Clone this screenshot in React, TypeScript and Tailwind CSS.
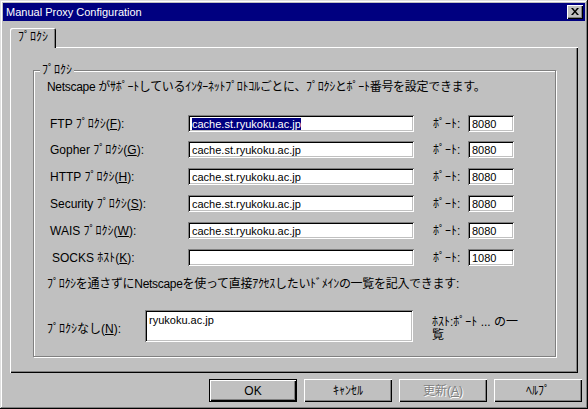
import React from "react";

const font = "font-['Liberation_Sans','Noto_Sans_CJK_JP',sans-serif]";
const sunken =
  "bg-white shadow-[inset_1px_1px_#808080,inset_-1px_-1px_#fff,inset_2px_2px_#000,inset_-2px_-2px_#c0c0c0]";
const raised = "shadow-[inset_1px_1px_#fff,inset_-1px_-1px_#000,inset_-2px_-2px_#808080]";

type Row = { label: string; key: string; host: string; port: string; selected?: boolean; pl?: string };

const rows: Row[] = [
  { label: "FTP ﾌﾟﾛｸｼ(", key: "F", host: "cache.st.ryukoku.ac.jp", port: "8080", selected: true },
  { label: "Gopher ﾌﾟﾛｸｼ(", key: "G", host: "cache.st.ryukoku.ac.jp", port: "8080" },
  { label: "HTTP ﾌﾟﾛｸｼ(", key: "H", host: "cache.st.ryukoku.ac.jp", port: "8080" },
  { label: "Security ﾌﾟﾛｸｼ(", key: "S", host: "cache.st.ryukoku.ac.jp", port: "8080" },
  { label: "WAIS ﾌﾟﾛｸｼ(", key: "W", host: "cache.st.ryukoku.ac.jp", port: "8080" },
  { label: "SOCKS ﾎｽﾄ(", key: "K", host: "", port: "1080", pl: "pl-[2px]" },
];

const rowGaps = ["mt-[22px]", "mt-[9px]", "mt-[10px]", "mt-[10px]", "mt-[10px]", "mt-[10px]"];

function ProxyRow({ row, gap }: { row: Row; gap: string }) {
  return (
    <div className={`flex items-center h-[17px] pl-[16px] ${gap}`}>
      <div className={`w-[138px] whitespace-nowrap ${row.pl ?? ""}`}>
        {row.label}
        <span className="underline">{row.key}</span>):
      </div>
      <div className={`w-[226px] h-[17px] flex items-center pl-[4px] text-[11px] ${sunken}`}>
        {row.selected ? (
          <span className="bg-[#000080] text-white leading-[12px] h-[12px]">{row.host}</span>
        ) : (
          <span>{row.host}</span>
        )}
      </div>
      <div className="ml-[19px] w-[35px] whitespace-nowrap">ﾎﾟｰﾄ:</div>
      <div className={`w-[46px] h-[17px] flex items-center pl-[4px] text-[11px] ${sunken}`}>{row.port}</div>
    </div>
  );
}

function Button({ children, isDefault, disabled }: { children: React.ReactNode; isDefault?: boolean; disabled?: boolean }) {
  return (
    <div
      className={`w-[88px] h-[23px] flex items-center justify-center ${raised} ${
        isDefault ? "border border-black" : ""
      } ${disabled ? "text-[#808080] [text-shadow:1px_1px_#fff]" : ""}`}
    >
      {children}
    </div>
  );
}

export default function App() {
  return (
    <div
      className={`w-[588px] h-[409px] bg-[#c0c0c0] p-[3px] flex flex-col text-[12px] leading-[12px] text-black ${font} shadow-[inset_-1px_-1px_#000,inset_1px_1px_#dfdfdf,inset_-2px_-2px_#808080,inset_2px_2px_#fff]`}
    >
      <div className="h-[18px] bg-[#000080] flex items-center justify-between pl-[3px] pr-[2px]">
        <span className="text-white text-[11px]">Manual Proxy Configuration</span>
        <div className={`w-[16px] h-[14px] bg-[#c0c0c0] flex items-center justify-center ${raised}`}>
          <svg width="8" height="7" viewBox="0 0 8 7" className="mb-[1px]">
            <path d="M0 0h2l2 2.5L6 0h2L5 3.5 8 7H6L4 4.5 2 7H0l3-3.5z" fill="#000" />
          </svg>
        </div>
      </div>

      <div className="mt-[7px] ml-[7px] -mb-[1px] relative z-10 w-[46px] h-[20px] bg-[#c0c0c0] rounded-t-[2px] flex items-center justify-center pb-[2px] shadow-[inset_1px_1px_#fff,inset_-1px_0_#000,inset_-2px_0_#808080]">
        ﾌﾟﾛｸｼ
      </div>

      <div className="ml-[7px] w-[568px] h-[326px] shadow-[inset_1px_1px_#fff,inset_-1px_-1px_#000,inset_-2px_-2px_#808080] pt-[23px] pl-[23px]">
        <div className="relative w-[523px] h-[287px] border border-[#808080] shadow-[inset_1px_1px_#fff,1px_1px_#fff]">
          <div className="absolute left-[6px] -top-[7px] px-[2px] bg-[#c0c0c0]">ﾌﾟﾛｸｼ</div>
          <div className="pl-[13px] mt-[10px] whitespace-nowrap tracking-[-0.3px]">
            Netscape がｻﾎﾟｰﾄしているｲﾝﾀｰﾈｯﾄﾌﾟﾛﾄｺﾙごとに、ﾌﾟﾛｸｼとﾎﾟｰﾄ番号を設定できます。
          </div>
          {rows.map((r, i) => (
            <ProxyRow key={r.key} row={r} gap={rowGaps[i]} />
          ))}
          <div className="pl-[13px] mt-[12px] whitespace-nowrap tracking-[-0.3px]">
            ﾌﾟﾛｸｼを通さずにNetscapeを使って直接ｱｸｾｽしたいﾄﾞﾒｲﾝの一覧を記入できます:
          </div>
          <div className="flex pl-[13px] mt-[20px]">
            <div className="w-[98px] mt-[13px] whitespace-nowrap">
              ﾌﾟﾛｸｼなし(<span className="underline">N</span>):
            </div>
            <div className={`w-[268px] h-[32px] pl-[4px] pt-[4px] text-[11px] ${sunken}`}>ryukoku.ac.jp</div>
            <div className="ml-[19px] mt-[6px] flex flex-col gap-[1px] leading-[12px] whitespace-nowrap">
              <span>ﾎｽﾄ:ﾎﾟｰﾄ ... の一</span>
              <span>覧</span>
            </div>
          </div>
        </div>
      </div>

      <div className="mt-[6px] flex justify-end gap-[7px] pr-[3px]">
        <Button isDefault>OK</Button>
        <Button>ｷｬﾝｾﾙ</Button>
        <Button disabled>
          更新(<span className="underline">A</span>)
        </Button>
        <Button>ﾍﾙﾌﾟ</Button>
      </div>
    </div>
  );
}
